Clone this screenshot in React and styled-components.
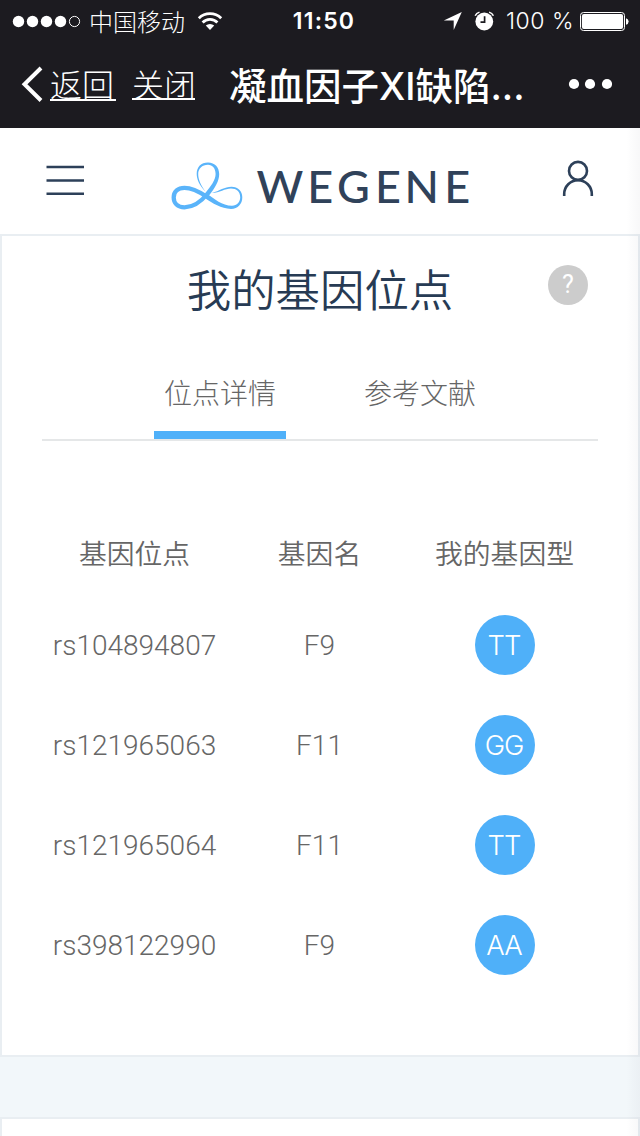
import React from "react";
import styled, { createGlobalStyle } from "styled-components";

const GlobalStyle = createGlobalStyle`
  * { box-sizing: border-box; }
  body { margin: 0; background: #f2f7fa; overflow: hidden; }
`;

const Screen = styled.div`
  position: relative;
  width: 640px;
  height: 1136px;
  overflow: hidden;
  background: #f2f7fa;
  color: #666;
  font-family: Inter, "Noto Sans CJK SC", sans-serif;
`;

const EdgeShade = styled.div`
  position: absolute;
  top: 128px;
  right: 0;
  bottom: 0;
  width: 14px;
  background: linear-gradient(to right, rgba(20, 20, 50, 0), rgba(20, 20, 50, 0.03));
  pointer-events: none;
`;

const StatusBar = styled.div`
  display: grid;
  grid-template-columns: 1fr 80px 1fr;
  align-items: center;
  height: 40px;
  background: #1c1b20;
  color: #fff;
  font-size: 23px;
  line-height: 40px;
`;

const StatusSide = styled.div`
  display: flex;
  align-items: center;
  justify-content: ${(p) => (p.$end ? "flex-end" : "flex-start")};
  padding: ${(p) => (p.$end ? "0 11px 0 0" : "0 0 0 12px")};
  white-space: nowrap;
`;

const Carrier = styled.span`
  margin: 0 12px 0 8px;
  font-size: 24px;
  font-family: "Noto Sans CJK SC", sans-serif;
  font-weight: 300;
`;

const Clock = styled.div`
  padding: 1px 0 0 8px;
  text-align: center;
  font-weight: 600;
  letter-spacing: 1.2px;
  white-space: nowrap;
`;

const Percent = styled.span`
  padding-top: 1px;
  margin: 0 5px 0 12px;
  font-weight: 300;
  letter-spacing: 0.5px;
`;

const NavBar = styled.header`
  display: flex;
  align-items: center;
  height: 88px;
  padding: 0 28px 0 21px;
  background: #1c1b20;
  color: #fff;
  font-family: "Noto Sans CJK SC", sans-serif;
`;

const NavLink = styled.a`
  height: ${(p) => p.$height}px;
  margin-right: ${(p) => p.$gap}px;
  border-bottom: 2px solid #fff;
  font-size: 32px;
  font-weight: 300;
  line-height: ${(p) => p.$height - 2}px;
  width: ${(p) => p.$width}px;
  white-space: nowrap;
`;

const NavTitle = styled.h1`
  flex: 1;
  margin: 0;
  padding-top: 5px;
  font-size: 37.5px;
  font-weight: 500;
  line-height: 83px;
  font-family: Inter, "Noto Sans CJK SC", sans-serif;
  white-space: nowrap;
`;

const SiteHeader = styled.header`
  display: flex;
  justify-content: space-between;
  height: 106px;
  padding: 32px 46px 0;
  background: #fff;
`;

const Card = styled.section`
  height: ${(p) => p.$height}px;
  margin-bottom: 60px;
  padding: 0 40px;
  border: 2px solid #e9eef2;
  background: #fff;
`;

const CardHead = styled.div`
  display: grid;
  grid-template-columns: 1fr auto 1fr;
  align-items: center;
  height: 108px;
`;

const CardTitle = styled.h2`
  grid-column: 2;
  margin: 0;
  padding-top: 3px;
  color: #273b54;
  font-size: 44.4px;
  font-weight: 350;
  line-height: 105px;
`;

const HelpButton = styled.span`
  justify-self: end;
  width: 40px;
  height: 40px;
  margin: 0 10px 10px 0;
  border-radius: 50%;
  background: #ccc;
  color: #fff;
  font-family: Roboto, sans-serif;
  font-size: 25px;
  font-weight: 400;
  line-height: 40px;
  text-align: center;
`;

const Tabs = styled.nav`
  display: flex;
  justify-content: center;
  gap: 68px;
  height: 97px;
  border-bottom: 2px solid #e5e7e8;
`;

const Tab = styled.a`
  width: 132px;
  height: 95px;
  border-bottom: 8px solid ${(p) => (p.$active ? "#4fb0f9" : "transparent")};
  font-size: 28px;
  font-weight: 300;
  line-height: 101px;
  text-align: center;
`;

const Table = styled.div`
  padding-top: 63px;
`;

const Row = styled.div`
  display: grid;
  grid-template-columns: 185px 185px 185px;
  align-items: center;
  height: ${(p) => (p.$head ? 91 : 100)}px;
  padding-top: ${(p) => (p.$head ? 4 : 0)}px;
  font-size: ${(p) => (p.$head ? 27.8 : 27.4)}px;
  font-weight: ${(p) => (p.$head ? 350 : 300)};
  text-align: center;
  justify-items: center;
  white-space: nowrap;
`;

const Heading = styled.span``;

const Value = styled.span`
  padding-top: 1px;
  font-family: Roboto, sans-serif;
  font-size: 28px;
`;

const Genotype = styled.span`
  width: 60px;
  height: 60px;
  border-radius: 50%;
  background: #4fb0f9;
  color: #fff;
  line-height: 61px;
  letter-spacing: -1px;
  text-indent: -1px;
`;

const loci = [
  ["rs104894807", "F9", "TT"],
  ["rs121965063", "F11", "GG"],
  ["rs121965064", "F11", "TT"],
  ["rs398122990", "F9", "AA"],
];

const Signal = () => (
  <svg width="69" height="14" viewBox="0 0 69 14" fill="#fff">
    {[6.5, 20.5, 34.5, 48.5].map((x) => (
      <circle key={x} cx={x} cy="7.5" r="5.7" />
    ))}
    <circle cx="62.5" cy="7.5" r="5.1" fill="none" stroke="#fff" strokeWidth="1" />
  </svg>
);

const Wifi = () => (
  <svg width="26" height="20" viewBox="0 0 26 20" fill="none" stroke="#fff" strokeWidth="2.8">
    <path d="M1.800 7.200a16 16 0 0 1 22.400 0" />
    <path d="M5.600 11.400a10.400 10.400 0 0 1 14.800 0" />
    <path d="M13 19l-4.200-4.400a6 6 0 0 1 8.400 0z" fill="#fff" stroke="none" />
  </svg>
);

const Location = () => (
  <svg width="19" height="19" viewBox="0 0 19 19" fill="#fff">
    <path d="M18.800 1L10.700 19V9.400H.8z" />
  </svg>
);

const AlarmSvg = styled.svg`
  margin-left: 12px;
`;

const Alarm = () => (
  <AlarmSvg width="20" height="20" viewBox="0 0 20 20">
    <circle cx="10.300" cy="10.500" r="8.900" fill="#fff" />
    <path d="M1.200 4.800Q2.300 2 5.500 1.100M15.100 1.100Q18.300 2 19.400 4.800" fill="none" stroke="#fff" strokeWidth="1.500" />
    <path d="M10.600 5.200v5.900H6.500" fill="none" stroke="#1c1b20" strokeWidth="1.700" />
  </AlarmSvg>
);

const Battery = () => (
  <svg width="50" height="20" viewBox="0 0 50 20" fill="#fff">
    <rect x="1.500" y="1.500" width="44" height="18" rx="3" fill="none" stroke="#fff" strokeWidth="1" />
    <rect x="2.900" y="2.900" width="41.200" height="15.200" rx="2" />
    <path d="M47 7.200q2.600 .9 2.600 3.300t-2.600 3.300z" />
  </svg>
);

const BackArrow = () => (
  <svg width="29" height="36" viewBox="0 0 29 36" fill="none" stroke="#fff" strokeWidth="4">
    <path d="M20 2L3.500 18.300 20 34.500" />
  </svg>
);

const More = () => (
  <svg width="44" height="12" viewBox="0 0 44 12" fill="#fff">
    <circle cx="6" cy="6" r="5.100" />
    <circle cx="22" cy="6" r="5.100" />
    <circle cx="39" cy="6" r="5.100" />
  </svg>
);

const MenuIcon = () => (
  <svg width="38" height="40" viewBox="0 0 38 40" stroke="#2d4059" strokeWidth="2.4">
    <path d="M.5 7H38M.5 20.500H38M.5 33.700H38" />
  </svg>
);

const LogoSvg = styled.svg`
  overflow: visible;
`;

const Logo = () => (
  <LogoSvg width="300" height="54" viewBox="173 160 300 54">
    <g fill="#5ab4fa">
      <path d="M205.600 191.800C199 185 196.700 179 196.700 173.800C196.700 167 201 162.500 208 162.500C215 162.500 219.200 167.500 219.200 174C219.200 181 215 188 209 195.500L205.200 193.200C211 186 215.600 180 215.600 174C215.600 168.500 212.500 164.800 208 164.800C202 164.800 198.200 169 198.200 174C198.200 179 200.500 185 205.600 191.800Z" />
      <path d="M207 193.800C214.500 198.800 222 205.800 232 205.800C237 205.800 240.200 202 240.200 197.300C240.200 192 236.500 188.600 231 188.600C225 188.600 219.500 192.900 212 193C219.500 191 224.500 186.800 231.500 186.800C238 186.800 242.300 191 242.300 197.300C242.300 204 238 208.900 231 208.900C221 208.900 213 203.500 204 197.600Z" />
    </g>
    <path
      d="M207.300 194C199.500 203.500 193 207.300 184.500 207.300C177.500 207.300 173.700 203 173.700 197.500C173.700 191.500 178 187.800 184.500 187.800C192.500 187.800 199 191.500 206.500 196.500"
      fill="none"
      stroke="#5ab4fa"
      strokeWidth="4.300"
    />
    <text
      x="256.500 307.300 337 374.900 404.500 444.200"
      y="203.300"
      fill="#30425a"
      fontFamily="Lato, sans-serif"
      fontSize="45"
      fontWeight="500"
    >
      WEGENE
    </text>
  </LogoSvg>
);

const UserIcon = () => (
  <svg width="32" height="38" viewBox="0 0 32 38" fill="none" stroke="#2d4059" strokeWidth="2.6">
    <circle cx="16" cy="10.900" r="9" />
    <path d="M2.200 36V34a13.800 13.800 0 0 1 27.600 0V36" />
  </svg>
);

export default function App() {
  return (
    <Screen>
      <GlobalStyle />
      <StatusBar>
        <StatusSide>
          <Signal />
          <Carrier>中国移动</Carrier>
          <Wifi />
        </StatusSide>
        <Clock>11:50</Clock>
        <StatusSide $end>
          <Location />
          <Alarm />
          <Percent>100 %</Percent>
          <Battery />
        </StatusSide>
      </StatusBar>
      <NavBar>
        <BackArrow />
        <NavLink $width={66} $height={34} $gap={16}>返回</NavLink>
        <NavLink $width={63} $height={32} $gap={34}>关闭</NavLink>
        <NavTitle>凝血因子XI缺陷...</NavTitle>
        <More />
      </NavBar>
      <SiteHeader>
        <MenuIcon />
        <Logo />
        <UserIcon />
      </SiteHeader>
      <Card $height={823}>
        <CardHead>
          <CardTitle>我的基因位点</CardTitle>
          <HelpButton>?</HelpButton>
        </CardHead>
        <Tabs>
          <Tab $active>位点详情</Tab>
          <Tab>参考文献</Tab>
        </Tabs>
        <Table>
          <Row $head>
            <Heading>基因位点</Heading>
            <Heading>基因名</Heading>
            <Heading>我的基因型</Heading>
          </Row>
          {loci.map(([locus, gene, genotype]) => (
            <Row key={locus}>
              <Value>{locus}</Value>
              <Value>{gene}</Value>
              <Genotype>{genotype}</Genotype>
            </Row>
          ))}
        </Table>
      </Card>
      <Card $height={100} />
      <EdgeShade />
    </Screen>
  );
}
